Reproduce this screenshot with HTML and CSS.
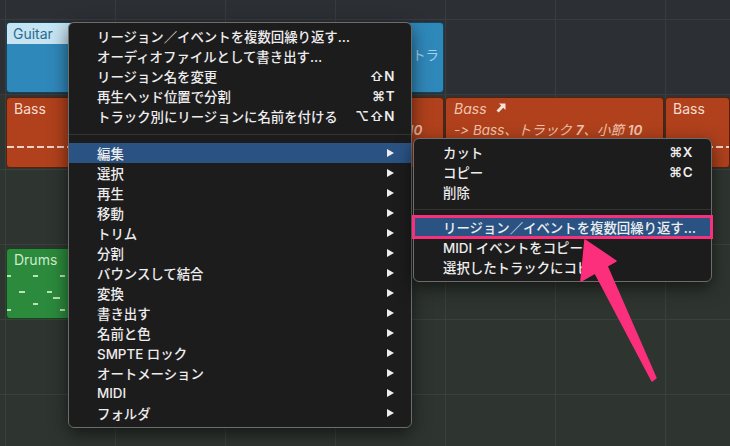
FILE: index.html
```html
<!DOCTYPE html>
<html lang="ja">
<head>
    <meta charset="UTF-8">
    <meta name="viewport" content="width=device-width, initial-scale=1.0">
    <title>Logic Pro - リージョンメニュー</title>
    <link rel="stylesheet" href="styles.css">
</head>
<body>
    <div class="arrange">
        <div class="lane blue top"></div>

        <div class="lane blue">
            <div class="region guitar first">
                <div class="region-head">Guitar</div>
            </div>
            <div class="region guitar alias-guitar">トラ</div>
        </div>

        <div class="lane">
            <div class="region bass first">
                <div class="region-label">Bass</div>
                <div class="midi-line"></div>
            </div>
            <div class="region bass alias">
                <div class="region-label">Bass <svg class="alias-icon" viewBox="0 0 10 10"><path d="M3 0.5H9.5V7L7.3 4.8L2.6 9.5L0.5 7.4L5.2 2.7Z"/></svg></div>
                <div class="alias-target">-&gt; Bass、トラック <b>7</b>、小節 <b>10</b></div>
            </div>
            <div class="region bass alias">
                <div class="region-label">Bass <svg class="alias-icon" viewBox="0 0 10 10"><path d="M3 0.5H9.5V7L7.3 4.8L2.6 9.5L0.5 7.4L5.2 2.7Z"/></svg></div>
                <div class="alias-target">-&gt; Bass、トラック <b>7</b>、小節 <b>10</b></div>
            </div>
            <div class="region bass last">
                <div class="region-label">Bass</div>
                <div class="midi-line"></div>
            </div>
        </div>

        <div class="lane"></div>

        <div class="lane drums-lane">
            <div class="region drums first">
                <div class="region-label">Drums</div>
                <span class="note" style="left:0;top:26px;width:4px"></span>
                <span class="note" style="left:26px;top:26px"></span>
                <span class="note" style="left:53px;top:26px"></span>
                <span class="note" style="left:12px;top:42px;width:6px"></span>
                <span class="note" style="left:40px;top:42px"></span>
                <span class="note" style="left:46px;top:48px;width:7px"></span>
                <span class="note" style="left:26px;top:54px"></span>
                <span class="note" style="left:0;top:60px;width:4px"></span>
                <span class="note" style="left:53px;top:60px"></span>
            </div>
        </div>

        <div class="lane"></div>
        <div class="lane rest"></div>
    </div>

    <div class="menu main-menu">
        <div class="item">リージョン／イベントを複数回繰り返す…</div>
        <div class="item">オーディオファイルとして書き出す…</div>
        <div class="item">リージョン名を変更<span class="key">⇧N</span></div>
        <div class="item">再生ヘッド位置で分割<span class="key">⌘T</span></div>
        <div class="item">トラック別にリージョンに名前を付ける<span class="key">⌥⇧N</span></div>
        <div class="sep"></div>
        <div class="item submenu active">編集</div>
        <div class="item submenu">選択</div>
        <div class="item submenu">再生</div>
        <div class="item submenu">移動</div>
        <div class="item submenu">トリム</div>
        <div class="item submenu">分割</div>
        <div class="item submenu">バウンスして結合</div>
        <div class="item submenu">変換</div>
        <div class="item submenu">書き出す</div>
        <div class="item submenu">名前と色</div>
        <div class="item submenu">SMPTE ロック</div>
        <div class="item submenu">オートメーション</div>
        <div class="item submenu">MIDI</div>
        <div class="item submenu">フォルダ</div>
    </div>

    <div class="menu sub-menu">
        <div class="item">カット<span class="key">⌘X</span></div>
        <div class="item">コピー<span class="key">⌘C</span></div>
        <div class="item">削除</div>
        <div class="sep"></div>
        <div class="item active marked">リージョン／イベントを複数回繰り返す…</div>
        <div class="item">MIDI イベントをコピー…</div>
        <div class="item">選択したトラックにコピー</div>
    </div>

    <svg class="callout" viewBox="0 0 730 446">
        <polygon points="585,240 616,261 607,266 656,378 652,381 595,273 581,281" />
    </svg>
</body>
</html>
```

FILE: styles.css
```css
* {
    box-sizing: border-box;
    margin: 0;
    padding: 0;
}

body {
    position: relative;
    width: 730px;
    height: 446px;
    overflow: hidden;
    background-color: #2e3530;
    font-family: "Inter", "Noto Sans CJK JP", sans-serif;
}

/* arrange area */
.arrange {
    display: flex;
    flex-direction: column;
    height: 446px;
}

.lane {
    flex: none;
    display: flex;
    gap: 1px;
    height: 75px;
    padding: 2px 0 0 6px;
    background-color: #2e3530;
    background-image: linear-gradient(90deg, #3a413b 1px, transparent 1px);
    background-size: 110px 100%;
    background-position: 5px 0;
    border-bottom: 1px solid #3a413b;
}

.lane.blue {
    background-color: #2c2f33;
    background-image: linear-gradient(90deg, #383b40 1px, transparent 1px);
    border-bottom-color: #383b40;
}

.lane.top {
    height: 20px;
}

.lane.drums-lane {
    padding-top: 3px;
}

.lane.rest {
    flex: 1;
    border-bottom: none;
}

.region {
    flex: none;
    width: 219px;
    height: 71px;
    border: 1px solid rgba(0, 0, 0, 0.5);
    border-radius: 4px;
    overflow: hidden;
    font-size: 14px;
    white-space: nowrap;
}

.region.first {
    width: 218px;
}

.region.last {
    flex: 1;
}

.region-label {
    display: flex;
    align-items: center;
    height: 20px;
    padding: 0 7px;
}

/* guitar */
.region.guitar {
    background: #2f88ba;
}

.region-head {
    height: 21px;
    line-height: 21px;
    padding: 0 6px;
    background: #c7e4f2;
    color: #2a6a8f;
}

.alias-guitar {
    display: flex;
    justify-content: flex-end;
    align-items: center;
    padding: 0 4px 8px 0;
    color: #a3d2ee;
    font-size: 13.4px;
}

/* bass */
.region.bass {
    background: #b0411c;
    color: #f6dbcf;
}

.midi-line {
    height: 2px;
    margin-top: 28px;
    background: repeating-linear-gradient(90deg, #f2d2c4 0 7px, transparent 7px 10px);
}

.region.alias {
    color: #f2c4ad;
    font-style: italic;
    font-feature-settings: "calt" 0, "liga" 0;
}

.alias .region-label {
    gap: 9px;
    padding-left: 8px;
}

.alias-icon {
    width: 10px;
    height: 10px;
    fill: #f8e4da;
}

.alias-target {
    height: 18px;
    line-height: 18px;
    margin-top: 3px;
    padding-left: 8px;
    font-size: 13.5px;
}

.alias-target b {
    font-weight: 600;
}

/* drums */
.region.drums {
    position: relative;
    background: #2b8a3b;
    color: #cdeccd;
}

.note {
    position: absolute;
    width: 5px;
    height: 2px;
    background: #b9e2b9;
}

/* context menus */
.menu {
    position: absolute;
    background: #1d1c1d;
    border: 1px solid #6c6c6c;
    border-radius: 6px;
    color: #ededed;
    font-size: 13.4px;
    font-weight: 500;
    box-shadow: 0 6px 18px rgba(0, 0, 0, 0.55);
}

.main-menu {
    left: 68px;
    top: 22px;
    width: 344px;
    padding: 3px 0 4px;
}

.sub-menu {
    left: 413px;
    top: 138px;
    width: 299px;
    padding: 3px 0 4px;
}

.item {
    display: flex;
    align-items: center;
    height: 20px;
    padding: 0 16px 0 28px;
    white-space: nowrap;
}

.sub-menu .item {
    padding: 0 18px 0 29px;
}

.item.active {
    background: #2a5384;
}

.item.marked {
    outline: 3px solid #f7307c;
    outline-offset: -1px;
}

.key {
    margin-left: auto;
    font-family: "Inter", "DejaVu Sans", sans-serif;
    font-weight: 600;
    letter-spacing: 0.5px;
}

.item.submenu::after {
    content: '';
    margin-left: auto;
    margin-right: 1px;
    border-left: 7px solid #eeeeee;
    border-top: 4.5px solid transparent;
    border-bottom: 4.5px solid transparent;
}

.sep {
    display: flex;
    align-items: center;
    height: 17px;
}

.sub-menu .sep {
    height: 15px;
}

.sep::before {
    content: '';
    flex: 1;
    height: 1px;
    background: #353435;
}

/* annotation arrow */
.callout {
    position: absolute;
    left: 0;
    top: 0;
    width: 730px;
    height: 446px;
    pointer-events: none;
}

.callout polygon {
    fill: #fb2f7c;
    stroke: #fb2f7c;
    stroke-width: 1.5;
    stroke-linejoin: round;
}
```
